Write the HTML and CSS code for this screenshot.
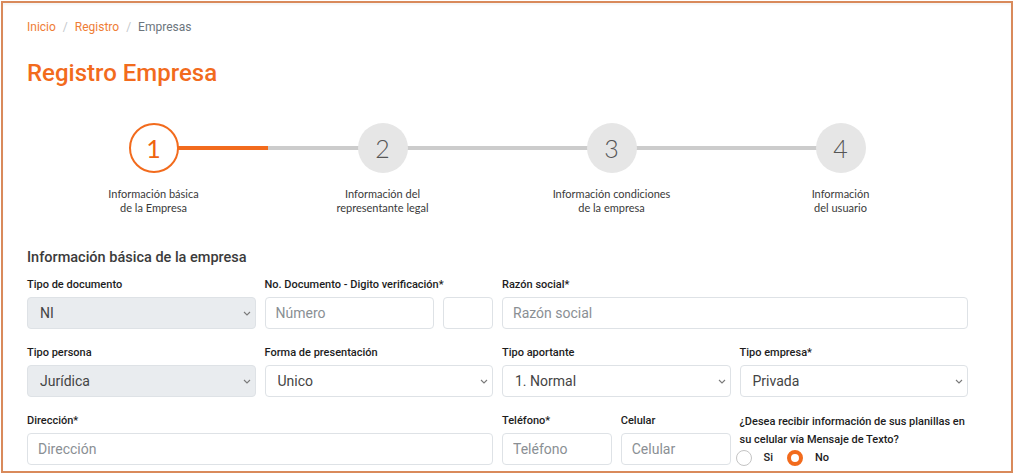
FILE: index.html
```html
<!DOCTYPE html>
<html>

<head>
  <link rel="stylesheet" href="styles.css">
</head>

<body>
  <div class="frame">
    <div class="content">
      <nav class="breadcrumb">
        <a href="#">Inicio</a>
        <span class="sep">/</span>
        <a href="#">Registro</a>
        <span class="sep">/</span>
        <span class="current">Empresas</span>
      </nav>

      <h1 class="title">Registro Empresa</h1>

      <div class="stepper">
        <div class="step active done">
          <div class="circle">1</div>
          <div class="step-label">Información básica<br>de la Empresa</div>
        </div>
        <div class="step">
          <div class="circle">2</div>
          <div class="step-label">Información del<br>representante legal</div>
        </div>
        <div class="step">
          <div class="circle">3</div>
          <div class="step-label">Información condiciones<br>de la empresa</div>
        </div>
        <div class="step">
          <div class="circle">4</div>
          <div class="step-label">Información<br>del usuario</div>
        </div>
      </div>

      <h2 class="section-title">Información básica de la empresa</h2>

      <form class="form-grid">
        <div class="field">
          <label>Tipo de documento</label>
          <div class="select-wrap">
            <select class="control" disabled>
              <option>NI</option>
            </select>
            <svg class="chevron" width="8" height="5" viewBox="0 0 8 5"><path d="M1 1l3 3 3-3" fill="none" stroke="#7a7a7a" stroke-width="1.1"/></svg>
          </div>
        </div>
        <div class="field">
          <label>No. Documento - Digito verificación*</label>
          <div class="doc-row">
            <input class="control" type="text" placeholder="Número">
            <input class="control dv" type="text">
          </div>
        </div>
        <div class="field span-2">
          <label>Razón social*</label>
          <input class="control" type="text" placeholder="Razón social">
        </div>

        <div class="field">
          <label>Tipo persona</label>
          <div class="select-wrap">
            <select class="control" disabled>
              <option>Jurídica</option>
            </select>
            <svg class="chevron" width="8" height="5" viewBox="0 0 8 5"><path d="M1 1l3 3 3-3" fill="none" stroke="#7a7a7a" stroke-width="1.1"/></svg>
          </div>
        </div>
        <div class="field">
          <label>Forma de presentación</label>
          <div class="select-wrap">
            <select class="control">
              <option>Unico</option>
            </select>
            <svg class="chevron" width="8" height="5" viewBox="0 0 8 5"><path d="M1 1l3 3 3-3" fill="none" stroke="#7a7a7a" stroke-width="1.1"/></svg>
          </div>
        </div>
        <div class="field">
          <label>Tipo aportante</label>
          <div class="select-wrap">
            <select class="control">
              <option>1. Normal</option>
            </select>
            <svg class="chevron" width="8" height="5" viewBox="0 0 8 5"><path d="M1 1l3 3 3-3" fill="none" stroke="#7a7a7a" stroke-width="1.1"/></svg>
          </div>
        </div>
        <div class="field">
          <label>Tipo empresa*</label>
          <div class="select-wrap">
            <select class="control">
              <option>Privada</option>
            </select>
            <svg class="chevron" width="8" height="5" viewBox="0 0 8 5"><path d="M1 1l3 3 3-3" fill="none" stroke="#7a7a7a" stroke-width="1.1"/></svg>
          </div>
        </div>

        <div class="field span-2">
          <label>Dirección*</label>
          <input class="control" type="text" placeholder="Dirección">
        </div>
        <div class="field phone-row">
          <div class="field">
            <label>Teléfono*</label>
            <input class="control" type="text" placeholder="Teléfono">
          </div>
          <div class="field">
            <label>Celular</label>
            <input class="control" type="text" placeholder="Celular">
          </div>
        </div>
        <div class="field sms">
          <p class="question">¿Desea recibir información de sus planillas en su celular vía Mensaje de Texto?</p>
          <div class="radios">
            <label class="radio"><span class="dot"></span>Si</label>
            <label class="radio"><span class="dot checked"></span>No</label>
          </div>
        </div>
      </form>
    </div>
  </div>
</body>

</html>
```

FILE: styles.css
```css
* {
  box-sizing: border-box;
}

body {
  margin: 0;
  font-family: Roboto, "Liberation Sans", Arial, sans-serif;
  color: #212529;
  background: #ffffff;
}

.frame {
  margin: 1px;
  width: 1012px;
  height: 472px;
  border: 2px solid #d98a5b;
  overflow: hidden;
  box-shadow: inset 0 2px 2px rgba(0, 0, 0, 0.04);
}

.content {
  padding: 14px 43px 0 24px;
}

.breadcrumb {
  display: flex;
  gap: 7px;
  font-size: 12px;
  line-height: 20px;
}

.breadcrumb a {
  color: #ef7d35;
  text-decoration: none;
}

.breadcrumb .sep {
  color: #c4c8cc;
}

.breadcrumb .current {
  color: #6c757d;
}

.title {
  margin: 21px 0 0;
  font-size: 24px;
  line-height: 30px;
  font-weight: 500;
  color: #f26b1d;
}

.stepper {
  display: grid;
  grid-template-columns: repeat(4, 1fr);
  margin: 35px 13px 0 12px;
}

.step {
  position: relative;
  display: flex;
  flex-direction: column;
  align-items: center;
}

.step::before,
.step::after {
  content: "";
  position: absolute;
  top: 23px;
  height: 4px;
  width: 50%;
  background: #cccccc;
}

.step::before {
  left: 0;
}

.step::after {
  right: 0;
}

.step:first-child::before,
.step:last-child::after {
  display: none;
}

.step.done::after {
  background: #f26b1d;
}

.circle {
  position: relative;
  z-index: 1;
  width: 50px;
  height: 50px;
  border-radius: 50%;
  background: #e6e6e6;
  color: #555555;
  font-family: Lato, "Open Sans", sans-serif;
  font-weight: 300;
  font-size: 25px;
  display: flex;
  align-items: center;
  justify-content: center;
}

.step.active .circle {
  background: #ffffff;
  border: 2px solid #f26b1d;
  color: #ee6412;
  font-weight: 400;
}

.step-label {
  margin-top: 14px;
  font-family: Lato, "Open Sans", sans-serif;
  font-size: 11px;
  line-height: 14px;
  color: #3a3a3a;
  text-align: center;
}

.section-title {
  margin: 33px 0 0;
  font-size: 14.5px;
  line-height: 20px;
  font-weight: 500;
  color: #3b3b3b;
}

.form-grid {
  display: grid;
  grid-template-columns: repeat(4, 1fr);
  column-gap: 9px;
  row-gap: 16px;
  margin-top: 9px;
}

.field {
  display: flex;
  flex-direction: column;
  min-width: 0;
}

.field label {
  font-size: 11px;
  line-height: 16px;
  font-weight: 500;
  color: #1d1d1d;
  margin-bottom: 4px;
}

.span-2 {
  grid-column: span 2;
}

.control {
  width: 100%;
  height: 32px;
  border: 1px solid #dee2e6;
  border-radius: 4px;
  background: #ffffff;
  padding: 0 10px;
  font-family: Roboto, "Liberation Sans", Arial, sans-serif;
  font-size: 14px;
  color: #444444;
  outline: none;
}

.control::placeholder {
  color: #8a8f94;
}

select.control {
  appearance: none;
  -webkit-appearance: none;
  padding: 0 24px 0 12px;
  opacity: 1;
}

select.control:disabled {
  background: #e9ecef;
  color: #444444;
}

.select-wrap {
  position: relative;
}

.chevron {
  position: absolute;
  right: 5px;
  top: 14px;
}

.doc-row {
  display: grid;
  grid-template-columns: 1fr 50px;
  gap: 9px;
}

.phone-row {
  flex-direction: row;
  gap: 9px;
}

.phone-row .field {
  flex: 1;
}

.sms {
  align-self: end;
}

.question {
  margin: 0;
  font-size: 11px;
  line-height: 18px;
  font-weight: 500;
  color: #1d1d1d;
}

.radios {
  display: flex;
  gap: 14px;
  margin-top: 0;
  margin-left: -4px;
}

.field .radio {
  display: flex;
  align-items: center;
  gap: 12px;
  margin: 0;
  font-size: 11px;
  line-height: 18px;
  font-weight: 500;
  color: #1d1d1d;
}

.dot {
  width: 16px;
  height: 16px;
  border-radius: 50%;
  border: 1px solid #c4c4c4;
  background: #ffffff;
}

.dot.checked {
  border: 4px solid #f26b1d;
}
```
